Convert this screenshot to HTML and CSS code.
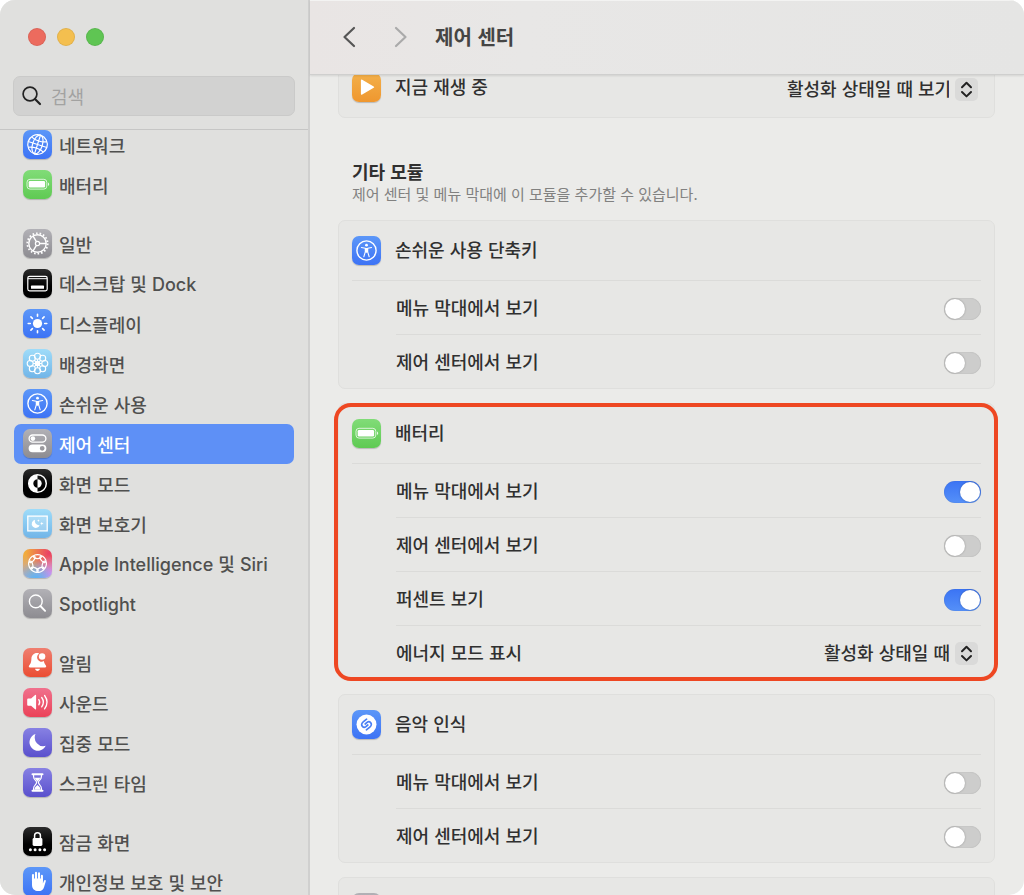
FILE: index.html
```html
<!DOCTYPE html>
<html lang="ko">
<head>
    <meta charset="UTF-8">
    <meta name="viewport" content="width=device-width, initial-scale=1.0">
    <title>제어 센터</title>
    <link rel="stylesheet" href="styles.css">
</head>
<body>
    <!-- icons used more than once -->
    <svg class="sprite" aria-hidden="true">
        <symbol id="i-access" viewBox="0 0 29 29">
            <circle cx="14.5" cy="14.5" r="9.6" fill="none" stroke="#fff" stroke-width="1.4"/>
            <circle cx="14.5" cy="9.2" r="1.4" fill="#fff"/>
            <path d="M9.4 11.5l3.9.7v3.6l-1.5 5M19.6 11.5l-3.9.7v3.6l1.5 5" fill="none" stroke="#fff" stroke-width="1.1" stroke-linecap="round" stroke-linejoin="round"/>
            <path d="M13 11.9h3v3.6l-.7 1.2h-1.6l-.7-1.2z" fill="#fff"/>
        </symbol>
        <symbol id="i-battery" viewBox="0 0 29 29">
            <rect x="4" y="9.3" width="19.8" height="9.8" rx="3" fill="none" stroke="#fff" stroke-opacity=".75" stroke-width="1"/>
            <rect x="5.7" y="10.9" width="16.4" height="6.6" rx="1.3" fill="#fff"/>
            <path d="M25 12.4c1.6.6 1.6 3 0 3.6z" fill="#fff" fill-opacity=".85"/>
        </symbol>
        <symbol id="i-updown" viewBox="0 0 23 23">
            <path d="M7 9.2l4.5-4.4L16 9.2M7 14l4.5 4.4L16 14" fill="none" stroke="#222" stroke-width="2" stroke-linecap="round" stroke-linejoin="round"/>
        </symbol>
    </svg>

    <div class="window">
        <aside class="sidebar">
            <div class="sidebar-top">
                <div class="lights">
                    <button class="light red" aria-label="닫기"></button>
                    <button class="light yellow" aria-label="최소화"></button>
                    <button class="light green" aria-label="확대"></button>
                </div>
                <label class="search">
                    <svg width="20" height="20" viewBox="0 0 20 20" aria-hidden="true"><circle cx="8" cy="8" r="6.9" fill="none" stroke="#222" stroke-width="1.7"/><path d="M13 13l5 5" stroke="#222" stroke-width="2.2" stroke-linecap="round"/></svg>
                    <input type="search" placeholder="검색" aria-label="검색">
                </label>
            </div>

            <nav class="menu">
                <div class="group">
                    <a href="#" class="item">
                        <svg class="icon blue" viewBox="0 0 29 29"><g fill="none" stroke="#fff" stroke-width="1.2" transform="rotate(18 14.5 14.5)"><circle cx="14.5" cy="14.5" r="9.8"/><ellipse cx="14.5" cy="14.5" rx="4.9" ry="9.8"/><path d="M14.5 4.7v19.6M4.7 14.5h19.6M6.5 9c4.6 2.4 11.4 2.4 16 0M6.5 20c4.6-2.4 11.4-2.4 16 0"/></g></svg>
                        네트워크
                    </a>
                    <a href="#" class="item">
                        <svg class="icon green"><use href="#i-battery"/></svg>
                        배터리
                    </a>
                </div>
                <div class="group">
                    <a href="#" class="item">
                        <svg class="icon gray" viewBox="0 0 29 29"><g fill="none" stroke="#fff"><circle cx="14.5" cy="14.5" r="8.7" stroke-width="1.4"/><circle cx="14.5" cy="14.5" r="10.2" stroke-width="1.8" stroke-dasharray="1.6 1.96"/><circle cx="14.5" cy="14.5" r="2.1" stroke-width="1.2"/><path d="M16.6 14.5h6.4M13.4 12.7l-3.3-5.6M13.4 16.3l-3.3 5.6" stroke-width="1.4"/></g></svg>
                        일반
                    </a>
                    <a href="#" class="item">
                        <svg class="icon black" viewBox="0 0 29 29"><rect x="4.8" y="7.3" width="19.4" height="14.6" rx="1.8" fill="none" stroke="#fff" stroke-width="1.2"/><path d="M5 9.7h19" stroke="#fff" stroke-width="1"/><rect x="8" y="16.6" width="13" height="3.2" rx=".6" fill="#fff"/></svg>
                        <span>데스크탑 및 <span class="latin">Dock</span></span>
                    </a>
                    <a href="#" class="item">
                        <svg class="icon blue" viewBox="0 0 29 29"><circle cx="14.5" cy="14.5" r="4.6" fill="#fff"/><path d="M14.5 5.2v2.1M14.5 21.7v2.1M5.2 14.5h2.1M21.7 14.5h2.1M7.9 7.9l1.5 1.5M19.6 19.6l1.5 1.5M7.9 21.1l1.5-1.5M19.6 9.4l1.5-1.5" stroke="#fff" stroke-width="1.6" stroke-linecap="round"/></svg>
                        디스플레이
                    </a>
                    <a href="#" class="item">
                        <svg class="icon sky" viewBox="0 0 29 29"><g fill="none" stroke="#fff" stroke-width="1.1"><circle cx="14.5" cy="7.2" r="3"/><circle cx="19.7" cy="9.3" r="3"/><circle cx="21.8" cy="14.5" r="3"/><circle cx="19.7" cy="19.7" r="3"/><circle cx="14.5" cy="21.8" r="3"/><circle cx="9.3" cy="19.7" r="3"/><circle cx="7.2" cy="14.5" r="3"/><circle cx="9.3" cy="9.3" r="3"/><circle cx="14.5" cy="14.5" r="2.2"/><path d="M14.5 10.2v8.6M10.2 14.5h8.6M11.4 11.4l6.2 6.2M17.6 11.4l-6.2 6.2"/></g></svg>
                        배경화면
                    </a>
                    <a href="#" class="item">
                        <svg class="icon blue"><use href="#i-access"/></svg>
                        손쉬운 사용
                    </a>
                    <a href="#" class="item selected" aria-current="page">
                        <svg class="icon gray" viewBox="0 0 29 29"><rect x="6.1" y="6" width="16.8" height="7.2" rx="3.6" fill="none" stroke="#fff" stroke-width="1.3"/><circle cx="9.9" cy="9.6" r="2.3" fill="#fff"/><path d="M9.5 15.4h10a3.9 3.9 0 0 1 0 7.8h-10a3.9 3.9 0 0 1 0-7.8zm9.7 1.5a2.4 2.4 0 1 0 0 4.8a2.4 2.4 0 0 0 0-4.8z" fill="#fff" fill-rule="evenodd"/></svg>
                        제어 센터
                    </a>
                    <a href="#" class="item">
                        <svg class="icon black" viewBox="0 0 29 29"><circle cx="14.5" cy="14.5" r="8.8" fill="none" stroke="#fff" stroke-width="1.5"/><path d="M14.5 5.7a8.8 8.8 0 0 0 0 17.6v-4.6a4.2 4.2 0 0 1 0-8.4z" fill="#fff"/><path d="M14.5 10.3a4.2 4.2 0 0 1 0 8.4z" fill="#fff"/></svg>
                        화면 모드
                    </a>
                    <a href="#" class="item">
                        <svg class="icon sky" viewBox="0 0 29 29"><rect x="4.8" y="7.1" width="19.4" height="14.8" fill="#fff" fill-opacity=".25" stroke="#fff" stroke-width="1.3"/><path d="M12 10.8a4.1 4.1 0 1 0 4.7 5.4a4.2 4.2 0 0 1-4.7-5.4z" fill="#fff"/><path d="M15.4 10.2l.4 1 1 .4-1 .4-.4 1-.4-1-1-.4 1-.4zM18.8 12.8l.5 1.3 1.3.5-1.3.5-.5 1.3-.5-1.3-1.3-.5 1.3-.5z" fill="#fff"/></svg>
                        화면 보호기
                    </a>
                    <a href="#" class="item">
                        <svg class="icon siri" viewBox="0 0 29 29"><g fill="none" stroke="#fff" stroke-width="1.2"><ellipse cx="14.5" cy="7.6" rx="3.9" ry="2"/><ellipse cx="14.5" cy="7.6" rx="3.9" ry="2" transform="rotate(51.4 14.5 14.5)"/><ellipse cx="14.5" cy="7.6" rx="3.9" ry="2" transform="rotate(102.9 14.5 14.5)"/><ellipse cx="14.5" cy="7.6" rx="3.9" ry="2" transform="rotate(154.3 14.5 14.5)"/><ellipse cx="14.5" cy="7.6" rx="3.9" ry="2" transform="rotate(205.7 14.5 14.5)"/><ellipse cx="14.5" cy="7.6" rx="3.9" ry="2" transform="rotate(257.1 14.5 14.5)"/><ellipse cx="14.5" cy="7.6" rx="3.9" ry="2" transform="rotate(308.6 14.5 14.5)"/></g></svg>
                        <span><span class="latin">Apple Intelligence</span> 및 <span class="latin">Siri</span></span>
                    </a>
                    <a href="#" class="item">
                        <svg class="icon gray" viewBox="0 0 29 29"><circle cx="12.8" cy="12.4" r="6.4" fill="none" stroke="#fff" stroke-width="1.4"/><path d="M17.4 17l4.7 4.8" stroke="#fff" stroke-width="1.9" stroke-linecap="round"/></svg>
                        <span><span class="latin">Spotlight</span></span>
                    </a>
                </div>
                <div class="group">
                    <a href="#" class="item">
                        <svg class="icon red" viewBox="0 0 29 29"><path d="M16.2 5.4c-4.6-1.4-7.6 1.6-7.8 5.3-.2 4.2-.9 5-2.3 6.9-.6.9-.3 1.8.8 1.8h15.2c1.1 0 1.4-.9.8-1.8-1-1.4-1.7-2.3-2-4.5a4.4 4.4 0 0 1-4.7-7.7zM12.1 20.8h4.8c-.4 2.8-4.4 2.8-4.8 0z" fill="#fff"/><circle cx="19.1" cy="8.5" r="3.2" fill="#fff"/></svg>
                        알림
                    </a>
                    <a href="#" class="item">
                        <svg class="icon pink" viewBox="0 0 29 29"><path d="M4.2 11.6q0-1 1-1h2.9l4-3.5q1-.7 1 .5v13.2q0 1.2-1 .5l-4-3.5H5.2q-1 0-1-1z" fill="#fff"/><path d="M15.8 11.6q1.8 2.6 0 5.2M18.7 9.5q3.4 4.7 0 9.4M21.6 7.5q4.9 6.7 0 13.4" fill="none" stroke="#fff" stroke-width="1.3" stroke-linecap="round"/></svg>
                        사운드
                    </a>
                    <a href="#" class="item">
                        <svg class="icon purple" viewBox="0 0 29 29"><path d="M12.5 6.1a8.5 8.5 0 1 0 10.2 11.7a8.6 8.6 0 0 1-10.2-11.7z" fill="#fff"/></svg>
                        집중 모드
                    </a>
                    <a href="#" class="item">
                        <svg class="icon purple" viewBox="0 0 29 29"><path d="M9.5 6.2h10M9.5 22.8h10" stroke="#fff" stroke-width="2" stroke-linecap="round"/><path d="M10.6 6.5v2.2c0 3 3 3.7 3 5.8s-3 2.8-3 5.8v2.2M18.4 6.5v2.2c0 3-3 3.7-3 5.8s3 2.8 3 5.8v2.2" fill="none" stroke="#fff" stroke-width="1.2"/><path d="M11.5 9.8h6l-3 4zM11.2 21.8q.2-2.8 3.3-4.8q3.1 2 3.3 4.8z" fill="#fff"/></svg>
                        스크린 타임
                    </a>
                </div>
                <div class="group">
                    <a href="#" class="item">
                        <svg class="icon black" viewBox="0 0 29 29"><rect x="9.6" y="11" width="9.8" height="8" rx="1.4" fill="#fff"/><path d="M11.6 11.4V8.6a2.9 2.9 0 0 1 5.8 0v2.8" fill="none" stroke="#fff" stroke-width="1.5"/><g fill="#fff"><circle cx="7.4" cy="22.7" r="1.5"/><circle cx="12.1" cy="22.7" r="1.5"/><circle cx="16.9" cy="22.7" r="1.5"/><circle cx="21.6" cy="22.7" r="1.5"/></g></svg>
                        잠금 화면
                    </a>
                    <a href="#" class="item">
                        <svg class="icon blue" viewBox="0 0 29 29"><path d="M10 14V8M13 13V5.9M16 13V6.4M18.9 14V8.9" stroke="#fff" stroke-width="2.1" stroke-linecap="round"/><path d="M9 11.5h10.9v5l1-2.6c.5-1.3 2.2-1 1.9.4l-1.7 5.6c-.9 2.9-2.9 4.2-5.7 4.2-4 0-6.4-2.3-6.4-6.3z" fill="#fff"/></svg>
                        개인정보 보호 및 보안
                    </a>
                </div>
            </nav>
        </aside>

        <main class="main">
            <header class="toolbar">
                <button class="nav-btn" aria-label="뒤로"><svg width="14" height="22" viewBox="0 0 14 22"><path d="M12 2L2.5 11 12 20" fill="none" stroke="#555" stroke-width="2.2" stroke-linecap="round" stroke-linejoin="round"/></svg></button>
                <button class="nav-btn" aria-label="앞으로"><svg width="14" height="22" viewBox="0 0 14 22"><path d="M2 2l9.5 9L2 20" fill="none" stroke="#aaa" stroke-width="2.2" stroke-linecap="round" stroke-linejoin="round"/></svg></button>
                <h1>제어 센터</h1>
            </header>

            <div class="content">
                <section class="card">
                    <div class="card-head">
                        <svg class="icon orange" viewBox="0 0 29 29"><path d="M8.9 7.5q0-1.5 1.3-.8l11.5 6.7q1.1.7 0 1.4l-11.5 6.7q-1.3.7-1.3-.8z" fill="#fff"/></svg>
                        <label for="now-playing">지금 재생 중</label>
                        <span class="picker">
                            <select id="now-playing"><option>활성화 상태일 때 보기</option></select>
                            <svg class="updown" aria-hidden="true"><use href="#i-updown"/></svg>
                        </span>
                    </div>
                </section>

                <div class="heading">
                    <h2>기타 모듈</h2>
                    <p>제어 센터 및 메뉴 막대에 이 모듈을 추가할 수 있습니다.</p>
                </div>

                <section class="card">
                    <div class="card-head">
                        <svg class="icon blue"><use href="#i-access"/></svg>
                        <h3>손쉬운 사용 단축키</h3>
                    </div>
                    <label class="row">메뉴 막대에서 보기 <input type="checkbox" role="switch" class="switch"></label>
                    <label class="row">제어 센터에서 보기 <input type="checkbox" role="switch" class="switch"></label>
                </section>

                <section class="card marked">
                    <div class="card-head">
                        <svg class="icon green"><use href="#i-battery"/></svg>
                        <h3>배터리</h3>
                    </div>
                    <label class="row">메뉴 막대에서 보기 <input type="checkbox" role="switch" class="switch" checked></label>
                    <label class="row">제어 센터에서 보기 <input type="checkbox" role="switch" class="switch"></label>
                    <label class="row">퍼센트 보기 <input type="checkbox" role="switch" class="switch" checked></label>
                    <div class="row">
                        <label for="energy-mode">에너지 모드 표시</label>
                        <span class="picker">
                            <select id="energy-mode"><option>활성화 상태일 때</option></select>
                            <svg class="updown" aria-hidden="true"><use href="#i-updown"/></svg>
                        </span>
                    </div>
                </section>

                <section class="card">
                    <div class="card-head">
                        <svg class="icon blue" viewBox="0 0 29 29"><circle cx="14.5" cy="14.5" r="10" fill="#fff"/><path d="M14.6 9.2l-3.4 2.7c-1.9 1.5-1.9 3.3-.8 4.5 1 1.1 2.5 1 3.500.2l1.900-1.600M14.400 19.800l3.400-2.700c1.900-1.500 1.900-3.300.8-4.500-1-1.100-2.500-1-3.500-.2l-1.900 1.600" fill="none" stroke="#4a80f5" stroke-width="1.7" stroke-linecap="round"/></svg>
                        <h3>음악 인식</h3>
                    </div>
                    <label class="row">메뉴 막대에서 보기 <input type="checkbox" role="switch" class="switch"></label>
                    <label class="row">제어 센터에서 보기 <input type="checkbox" role="switch" class="switch"></label>
                </section>

                <section class="card">
                    <div class="card-head">
                        <svg class="icon gray" viewBox="0 0 29 29"></svg>
                    </div>
                </section>
            </div>
        </main>
    </div>
</body>
</html>
```

FILE: styles.css
```css
* {
    box-sizing: border-box;
}

body {
    margin: 0;
    background: #fff;
    color: #303030;
    font-family: 'Noto Sans CJK KR', sans-serif;
    font-size: 18px;
    font-weight: 500;
    line-height: 24px;
}

h1, h2, h3, p {
    margin: 0;
}

h3 {
    font-size: 18px;
    font-weight: 500;
}

button {
    border: none;
    padding: 0;
    background: none;
}

.sprite {
    position: absolute;
    width: 0;
    height: 0;
}

.window {
    display: flex;
    height: 100vh;
    overflow: hidden;
    border-radius: 15px;
    background: #ebebe9;
    box-shadow: inset 0 1px 0 #f3f3f2;
}

/* sidebar */
.sidebar {
    display: flex;
    flex-direction: column;
    flex: 0 0 310px;
    min-width: 0;
    background: #e0e0de;
    border-right: 2px solid #d0d0cf;
}

.sidebar-top {
    padding: 28px 13px 13px;
    border-bottom: 1px solid #c6c6c5;
}

.lights {
    display: flex;
    gap: 11px;
    padding-left: 15px;
    margin-bottom: 30px;
}

.light {
    width: 18px;
    height: 18px;
    border-radius: 50%;
    box-shadow: inset 0 0 0 1px rgba(0, 0, 0, 0.08);
}

.light.red {
    background: #ec6b5e;
}

.light.yellow {
    background: #f4bf4f;
}

.light.green {
    background: #5fc553;
}

.search {
    display: flex;
    align-items: center;
    gap: 9px;
    height: 40px;
    padding: 0 8px;
    border: 1px solid #cacac9;
    border-radius: 7px;
    background: #d2d2d1;
}

.search input {
    flex: 1;
    min-width: 0;
    padding: 0;
    border: none;
    outline: none;
    background: transparent;
    font: inherit;
    font-weight: 400;
}

.search input::placeholder {
    color: #a2a2a1;
}

.menu {
    flex: 1;
    min-height: 0;
    margin-top: -5px;
    padding: 0 14px;
    overflow-y: auto;
    scrollbar-width: none;
}

.group {
    margin-bottom: 19px;
}

.item {
    display: flex;
    align-items: center;
    gap: 7px;
    height: 40px;
    padding: 0 9px 1px;
    border-radius: 7px;
    color: #50504f;
    text-decoration: none;
    white-space: nowrap;
}

.item.selected {
    background: #5e90f6;
    color: #fff;
}

.latin {
    font-family: Inter, sans-serif;
}

/* icon tiles */
.icon {
    flex: none;
    width: 29px;
    height: 29px;
    border-radius: 7px;
    box-shadow: 0 1px 1px rgba(0, 0, 0, 0.2);
}

.icon.blue {
    background: linear-gradient(#5c97f8, #3d73f5);
}

.icon.green {
    background: linear-gradient(#81dc78, #5fca53);
}

.icon.gray {
    background: linear-gradient(#b2b1b6, #8d8c91);
}

.icon.black {
    background: linear-gradient(#2b2b2b, #000 60%);
}

.icon.sky {
    background: linear-gradient(#9fdcf9, #71b5e8);
}

.icon.red {
    background: linear-gradient(#ef7f70, #eb4d33);
}

.icon.pink {
    background: linear-gradient(#f0718d, #eb4258);
}

.icon.purple {
    background: linear-gradient(#8781e3, #5a50cd);
}

.icon.orange {
    background: linear-gradient(#f3b04a, #ef972f);
}

.icon.siri {
    background:
        radial-gradient(circle at 45% 105%, #55b5f8, transparent 55%),
        radial-gradient(circle at 100% 90%, #d98af8, transparent 50%),
        radial-gradient(circle at 90% 15%, #ea3f66, transparent 65%),
        linear-gradient(#f1ac3c 20%, #b9a9c4);
}

/* main pane */
.main {
    display: flex;
    flex-direction: column;
    flex: 1;
    min-width: 0;
}

.toolbar {
    z-index: 1;
    display: flex;
    align-items: center;
    flex: none;
    gap: 38px;
    height: 75px;
    padding-left: 32px;
    border-bottom: 1px solid #cfcfce;
    background: linear-gradient(90deg, #e9e5e4, #e8e7e6 30%, #e5e5e4);
    box-shadow: 0 1px 2px rgba(0, 0, 0, 0.1), inset 0 1px 0 #f3f3f2;
}

.toolbar h1 {
    margin-left: -11px;
    color: #454544;
    font-size: 20px;
    font-weight: 700;
}

.nav-btn {
    display: flex;
}

.content {
    flex: 1;
    min-height: 0;
    margin-top: -18px;
    padding: 0 29px 14px 28px;
    overflow-y: auto;
    scrollbar-width: none;
}

.heading {
    padding: 27px 14px 15px;
}

.heading h2 {
    font-size: 18px;
    font-weight: 700;
}

.heading p {
    color: #818180;
    font-size: 15px;
    font-weight: 400;
    line-height: 22px;
}

.card {
    margin-bottom: 14px;
    padding: 0 13px;
    border: 1px solid #dfdfdd;
    border-radius: 7px;
    background: #e7e7e5;
}

.card-head {
    display: flex;
    align-items: center;
    gap: 14px;
    height: 59px;
}

.card-head h3,
.card-head label {
    padding-bottom: 3px;
}

.row {
    display: flex;
    align-items: center;
    justify-content: space-between;
    height: 54px;
    margin-left: 44px;
    padding-bottom: 2px;
    border-top: 1px solid #dbdbd9;
}

.card-head + .row {
    margin-left: 0;
    padding-left: 44px;
}

.marked {
    position: relative;
}

.marked::after {
    content: '';
    position: absolute;
    inset: -1px -4px -2px -5px;
    border: 4px solid #ee4722;
    border-radius: 17px;
    pointer-events: none;
}

.switch {
    appearance: none;
    width: 37px;
    height: 22px;
    margin: 5px 0 0;
    padding: 1px;
    border-radius: 11px;
    background: #cdcdcc;
    box-shadow: inset 0 0 1px rgba(0, 0, 0, 0.25);
}

.switch::before {
    content: '';
    display: block;
    width: 20px;
    height: 20px;
    border-radius: 50%;
    background: #fff;
    box-shadow: 0 0 2px rgba(0, 0, 0, 0.3);
}

.switch:checked {
    background: linear-gradient(#3b74f4, #5590f8);
}

.switch:checked::before {
    margin-left: auto;
}

.picker {
    position: relative;
    display: flex;
    align-items: center;
    margin-left: auto;
    padding-right: 3px;
}

.picker select {
    appearance: none;
    padding: 0 29px 0 0;
    border: none;
    background: transparent;
    color: inherit;
    font: inherit;
}

.updown {
    position: absolute;
    right: 3px;
    width: 23px;
    height: 23px;
    margin-top: 4px;
    border-radius: 5px;
    background: #dadad9;
    pointer-events: none;
}
```
